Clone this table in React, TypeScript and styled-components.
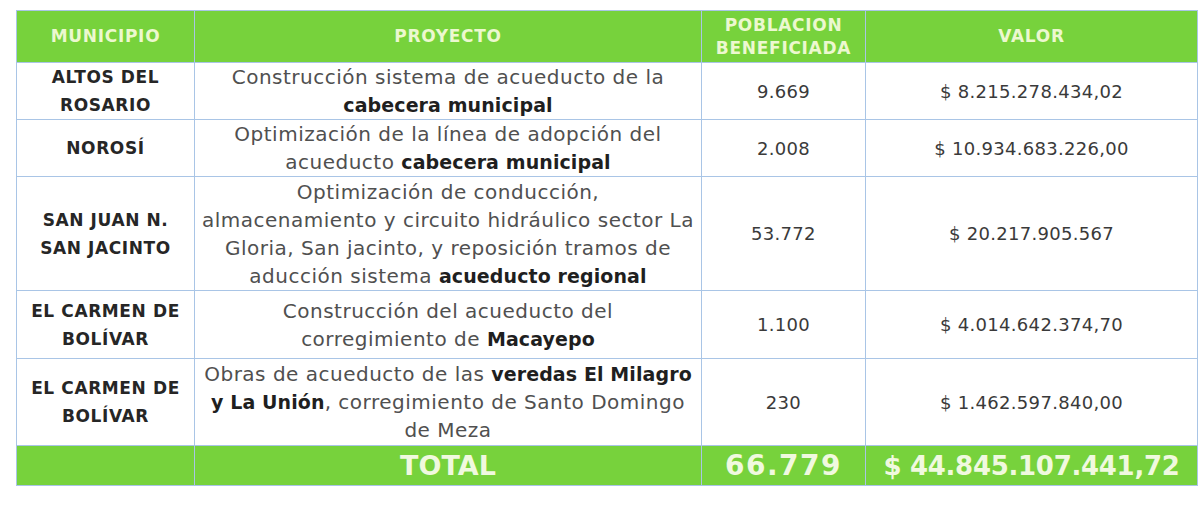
import React from "react";
import styled, { createGlobalStyle } from "styled-components";

const Global = createGlobalStyle`
  html, body { margin: 0; padding: 0; background: #ffffff; }
  body { font-family: "DejaVu Sans", "Liberation Sans", sans-serif; }
`;

const Page = styled.div`
  width: 1200px;
  height: 508px;
  padding: 10px 0 0 16px;
  box-sizing: border-box;
`;

const Table = styled.table`
  border-collapse: collapse;
  table-layout: fixed;
  width: 1181px;
`;

const Col = styled.col<{ $w: number }>`
  width: ${(p) => p.$w}px;
`;

const GreenRow = styled.tr<{ $h: number }>`
  background: #77d23c;
  height: ${(p) => p.$h}px;
`;

const BodyRow = styled.tr<{ $h: number }>`
  height: ${(p) => p.$h}px;
  background: #ffffff;
`;

const HeadCell = styled.th`
  border: 1px solid #a9c5e6;
  color: #ecf8cf;
  font-size: 17px;
  font-weight: bold;
  line-height: 23px;
  text-align: center;
  vertical-align: middle;
  padding: 0;
  letter-spacing: 0.7px;
`;

const TotalCell = styled.td<{ $size: number; $ls?: number }>`
  border: 1px solid #a9c5e6;
  color: #f0f9df;
  font-size: ${(p) => p.$size}px;
  letter-spacing: ${(p) => p.$ls ?? 0}px;
  font-weight: bold;
  text-align: center;
  vertical-align: middle;
  padding: 0;
  line-height: 36px;
`;

const MuniCell = styled.td`
  border: 1px solid #a9c5e6;
  color: #262626;
  font-size: 17px;
  font-weight: bold;
  letter-spacing: 0.6px;
  line-height: 28px;
  text-align: center;
  vertical-align: middle;
  padding: 0;
`;

const ProjectCell = styled.td`
  border: 1px solid #a9c5e6;
  color: #505050;
  font-size: 20px;
  letter-spacing: 0.5px;
  line-height: 28px;
  text-align: center;
  vertical-align: middle;
  padding: 0;
  white-space: nowrap;
  b {
    color: #1f1f1f;
    font-size: 19px;
    font-weight: bold;
    letter-spacing: 0.1px;
  }
`;

const NumCell = styled.td`
  border: 1px solid #a9c5e6;
  color: #3a3a3a;
  font-size: 18px;
  letter-spacing: 0.3px;
  text-align: center;
  vertical-align: middle;
  padding: 0;
`;

type Row = {
  h: number;
  muni: React.ReactNode;
  project: React.ReactNode;
  pop: string;
  value: string;
};

const rows: Row[] = [
  {
    h: 57,
    muni: (<>ALTOS DEL<br />ROSARIO</>),
    project: (<>Construcción sistema de acueducto de la<br /><b>cabecera municipal</b></>),
    pop: "9.669",
    value: "$ 8.215.278.434,02",
  },
  {
    h: 57,
    muni: "NOROSÍ",
    project: (<>Optimización de la línea de adopción del<br />acueducto <b>cabecera municipal</b></>),
    pop: "2.008",
    value: "$ 10.934.683.226,00",
  },
  {
    h: 114,
    muni: (<>SAN JUAN N.<br />SAN JACINTO</>),
    project: (
      <>
        Optimización de conducción,<br />
        almacenamiento y circuito hidráulico sector La<br />
        Gloria, San jacinto, y reposición tramos de<br />
        aducción sistema <b>acueducto regional</b>
      </>
    ),
    pop: "53.772",
    value: "$ 20.217.905.567",
  },
  {
    h: 68,
    muni: (<>EL CARMEN DE<br />BOLÍVAR</>),
    project: (<>Construcción del acueducto del<br />corregimiento de <b>Macayepo</b></>),
    pop: "1.100",
    value: "$ 4.014.642.374,70",
  },
  {
    h: 87,
    muni: (<>EL CARMEN DE<br />BOLÍVAR</>),
    project: (
      <>
        Obras de acueducto de las <b>veredas El Milagro</b><br />
        <b>y La Unión</b>, corregimiento de Santo Domingo<br />
        de Meza
      </>
    ),
    pop: "230",
    value: "$ 1.462.597.840,00",
  },
];

export default function App() {
  return (
    <Page>
      <Global />
      <Table>
        <colgroup>
          <Col $w={178} />
          <Col $w={507} />
          <Col $w={164} />
          <Col $w={332} />
        </colgroup>
        <thead>
          <GreenRow $h={52}>
            <HeadCell>MUNICIPIO</HeadCell>
            <HeadCell>PROYECTO</HeadCell>
            <HeadCell>POBLACION<br />BENEFICIADA</HeadCell>
            <HeadCell>VALOR</HeadCell>
          </GreenRow>
        </thead>
        <tbody>
          {rows.map((r, i) => (
            <BodyRow key={i} $h={r.h}>
              <MuniCell>{r.muni}</MuniCell>
              <ProjectCell>{r.project}</ProjectCell>
              <NumCell>{r.pop}</NumCell>
              <NumCell>{r.value}</NumCell>
            </BodyRow>
          ))}
          <GreenRow $h={40}>
            <TotalCell $size={1} />
            <TotalCell $size={27}>TOTAL</TotalCell>
            <TotalCell $size={28} $ls={1.5}>66.779</TotalCell>
            <TotalCell $size={26} $ls={-0.3}>$ 44.845.107.441,72</TotalCell>
          </GreenRow>
        </tbody>
      </Table>
    </Page>
  );
}
